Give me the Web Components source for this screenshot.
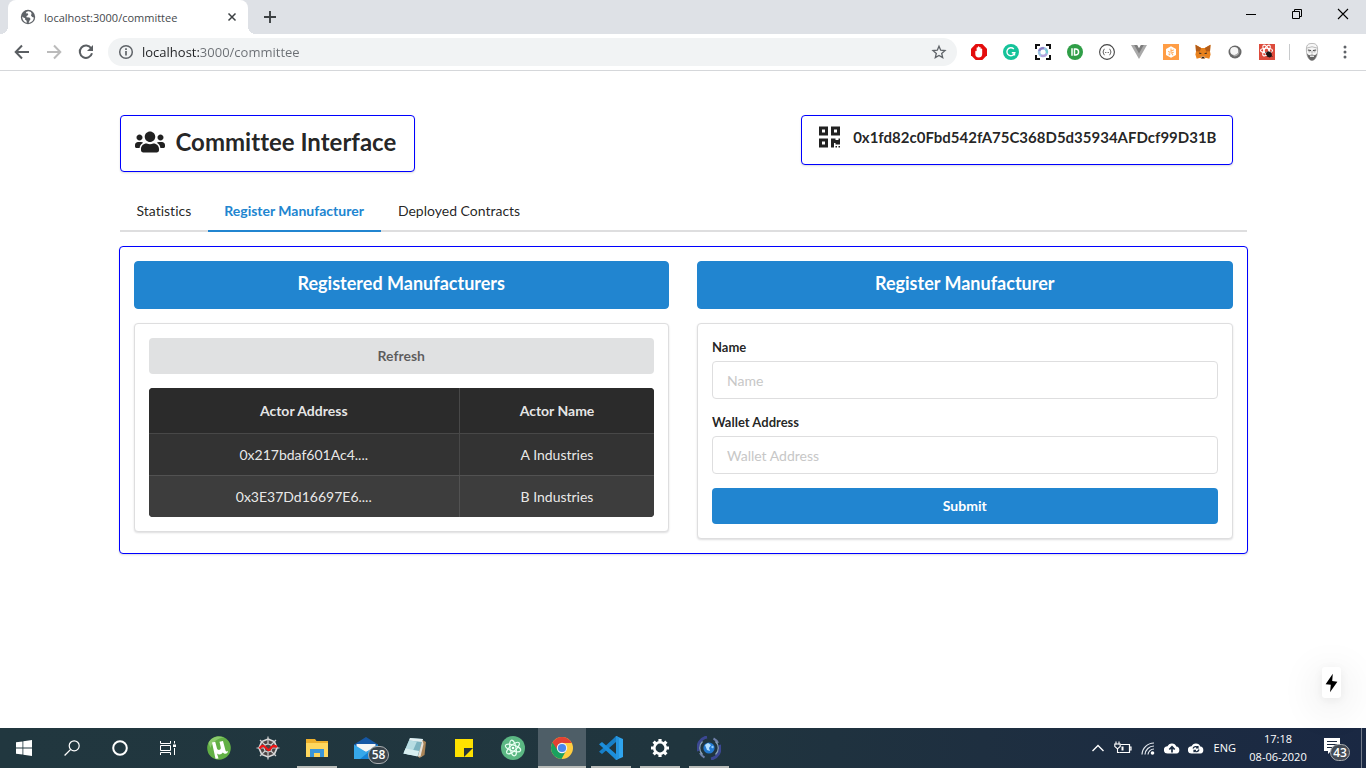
<!DOCTYPE html>
<html lang="en">
<head>
<meta charset="utf-8">
<meta name="viewport" content="width=device-width, initial-scale=1">
<title>Committee Interface</title>
<style>
  html, body { margin: 0; height: 100%; }
  body { background: #fff; font-family: Lato, "Liberation Sans", sans-serif; font-size: 14px; font-variant-ligatures: none; color: rgba(0,0,0,.87); }
</style>
</head>
<body>
<app-desktop></app-desktop>

<script>
const ICONS = {
  globe: ['0 0 16 16', '<circle cx="8" cy="8" r="7.2" fill="#5f6368"/><path d="M8.600 2.200C7 2.200 6 3 5.800 4.200L8 4.400 8.200 6 6.600 7 6.400 8.200 9.400 8.400 10.600 10 9.600 11.600 8.600 13.800C11.500 13.600 13.700 11.200 13.800 8.400L12.200 8 11 6.400 11.600 4.600 10.800 2.900ZM2.300 7.400C2 10.300 4 12.900 6.800 13.700L6.600 11.800 5 10.400 5.200 9.200 3.400 8.600Z" fill="#fff"/>'],
  close: ['0 0 16 16', '<path d="M4 4 12 12M12 4 4 12" stroke="#3c4043" stroke-width="1.7"/>'],
  plus: ['0 0 16 16', '<path d="M8 2V14M2 8H14" stroke="#3c4043" stroke-width="1.900"/>'],
  minimize: ['0 0 12 12', '<path d="M1 6.500H11" stroke="#000"/>'],
  restore: ['0 0 12 12', '<path d="M1.500 3.500H8.500V10.500H1.500ZM3.500 3.500V1.500H10.500V8.500H8.500" fill="none" stroke="#000"/>'],
  winclose: ['0 0 12 12', '<path d="M1 1 11 11M11 1 1 11" stroke="#000" stroke-width="1.100"/>'],
  back: ['0 0 16 16', '<path d="M15 8H2M8 1.500 1.700 8 8 14.500" fill="none" stroke="#5a5e62" stroke-width="2"/>'],
  forward: ['0 0 16 16', '<path d="M1 8H14M8 1.500 14.300 8 8 14.500" fill="none" stroke="#bbb" stroke-width="2"/>'],
  reload: ['0 0 16 16', '<path d="M13.200 4.300A6.200 6.200 0 1 0 14 9.300" fill="none" stroke="#5a5e62" stroke-width="2"/><path d="M15 1V7H9Z" fill="#5a5e62"/>'],
  info: ['0 0 16 16', '<circle cx="8" cy="8" r="6.300" fill="none" stroke="#5f6368" stroke-width="1.500"/><path d="M8 7V11.500M8 4.300V6" stroke="#5f6368" stroke-width="1.700"/>'],
  star: ['0 0 16 16', '<path d="M8 2.200 9.700 6.200 14 6.600 10.700 9.400 11.700 13.600 8 11.400 4.300 13.600 5.300 9.400 2 6.600 6.300 6.200Z" fill="none" stroke="#5f6368" stroke-width="1.300"/>'],
  adblock: ['0 0 16 16', '<path d="M4.700 0H11.300L16 4.700V11.300L11.300 16H4.700L0 11.300V4.700Z" fill="#e40d0d"/><path d="M4.300 7.500C4.300 6.500 5.500 6.500 5.600 7.300V4C5.600 3 6.900 3 6.900 4V3C6.900 2.100 8.300 2.100 8.300 3V3.600C8.300 2.800 9.700 2.800 9.700 3.800V5C9.700 4.200 11.200 4.200 11.200 5.200V10C11.200 12.500 9.700 13.500 7.800 13.500 5.500 13.500 4.300 12 4.300 10Z" fill="#fff"/>'],
  grammarly: ['0 0 16 16', '<circle cx="8" cy="8" r="8" fill="#15c39a"/><path d="M10.800 5A4 4 0 1 0 11.800 8.800H8.800M11.500 8.800V11.500" fill="none" stroke="#fff" stroke-width="1.400"/>'],
  lens: ['0 0 16 16', '<path d="M1 5V1H5M11 1H15V5M15 11V15H11M5 15H1V11" fill="none" stroke="#111" stroke-width="2"/><circle cx="8" cy="8" r="3.900" fill="none" stroke="#9cc4e4" stroke-width="2.600"/><path d="M4.200 7A4 4 0 0 1 9 4.200" fill="none" stroke="#8e7cc3" stroke-width="2.200"/><path d="M6 11.300A4 4 0 0 0 11.500 10" fill="none" stroke="#b9a0dc" stroke-width="2"/><path d="M11 5.500A4 4 0 0 1 12 9" fill="none" stroke="#74cfd0" stroke-width="2"/>'],
  pushbullet: ['0 0 16 16', '<circle cx="8" cy="8" r="8" fill="#2f9e47"/><path d="M5 4.300V11.700" stroke="#fff" stroke-width="1.500"/><path d="M7.500 4.900H8.500A3.100 3.100 0 0 1 8.500 11.100H7.500Z" fill="none" stroke="#fff" stroke-width="1.500"/>'],
  braces: ['0 0 16 16', '<circle cx="8" cy="8" r="7.400" fill="#fff" stroke="#444" stroke-width="1.100"/><path d="M5.500 5.200C4.200 5.200 4.900 7.500 3.800 8 4.900 8.500 4.200 10.800 5.500 10.800M10.500 5.200C11.800 5.200 11.100 7.500 12.200 8 11.100 8.500 11.800 10.800 10.500 10.800M6.300 8.500H7.300M8.700 8.500H9.700" fill="none" stroke="#444" stroke-width="1"/>'],
  vue: ['0 0 16 16', '<path d="M0 1H5L8 6 11 1H16L8 15Z" fill="#a9a9a9"/><path d="M3.200 1H6.200L8 4.200 9.800 1H12.800L8 9.400Z" fill="#7d7d7d"/>'],
  hex: ['0 0 16 16', '<path d="M0 0H16V16H0Z" fill="#ff9d45"/><path d="M8 2.200 13 5.100V10.900L8 13.800 3 10.900V5.100Z" fill="#fff"/><path d="M8 4.500V7.300L10.800 5.800M10.800 8.200 8.500 8.800 10 11.200M7.300 8.600 5.200 7.300M7 9.800 6 11.200M5.500 10H7.500" fill="none" stroke="#ffb066" stroke-width="1.100"/>'],
  metamask: ['0 0 16 16', '<path d="M.5.8 6.200 4H9.800L15.500.8 15 7.500 15.600 10.500 14.300 14.700 10.700 13.800 9.300 15H6.700L5.300 13.800 1.700 14.700.4 10.500 1 7.500Z" fill="#e8821e"/><path d="M.5.8 6.200 4 4.800 7.500 1 7.200ZM15.500.8 9.800 4 11.200 7.500 15 7.200Z" fill="#b35c18"/><path d="M4.500 8.200 7 10H4.200ZM11.500 8.200 9 10H11.800Z" fill="#3c3027"/><path d="M5.500 12.500 6.500 15H9.500L10.500 12.500Z" fill="#caa98a"/><path d="M7 13H9L9.300 14.300H6.700Z" fill="#2a2522"/>'],
  sphere: ['0 0 16 16', '<circle cx="8" cy="8" r="6.500" fill="#686868"/><circle cx="7.300" cy="7" r="4.100" fill="#f5f5f5"/><path d="M7 12.500C11 12.300 13 9.500 12.300 5.500 11.600 9 10 11 6 11Z" fill="#aaa"/>'],
  reactbug: ['0 0 16 16', '<path d="M0 0H16V16H0Z" fill="#dd4b3c"/><g fill="none" stroke="#fff" stroke-width="1.100"><ellipse cx="7.500" cy="6.500" rx="6" ry="2.300"/><ellipse cx="7.500" cy="6.500" rx="6" ry="2.300" transform="rotate(60 7.500 6.500)"/><ellipse cx="7.500" cy="6.500" rx="6" ry="2.300" transform="rotate(120 7.500 6.500)"/></g><ellipse cx="10" cy="10.300" rx="2.400" ry="3.200" fill="#191414" transform="rotate(-35 10 10.300)"/><path d="M6 8.500 13.500 12.500M8 13 12 7.500M7 10.500 13 9.800" stroke="#191414" stroke-width=".8"/>'],
  avatar: ['0 0 20 20', '<path d="M4.400 8C4 1.500 8 1.500 10 1.500S16 1.500 15.600 8C15.600 14.500 12.800 18.500 10 18.500S4.400 14.500 4.400 8Z" fill="#f7f7f7" stroke="#999" stroke-width=".7"/><path d="M5 11.500 7 13.200 10 12.600 13 13.200 15 11.500C14.400 15.500 12.500 18.500 10 18.500S5.600 15.500 5 11.500Z" fill="#666"/><path d="M5.800 8 9 8.500M11 8.500 14.200 8" stroke="#444" stroke-width="1.200"/><path d="M6.500 9.800H8.500M11.500 9.800H13.500M10 8.500V11.500" stroke="#888" stroke-width=".7"/><path d="M8 14.200H12" stroke="#fff" stroke-width="1.200"/><path d="M5 6Q10 3.500 15 6" stroke="#aaa" fill="none" stroke-width=".8"/>'],
  dots: ['0 0 16 16', '<circle cx="8" cy="3" r="1.500" fill="#5f6368"/><circle cx="8" cy="8" r="1.500" fill="#5f6368"/><circle cx="8" cy="13" r="1.500" fill="#5f6368"/>'],
  users: ['0 0 640 512', '<path fill="currentColor" d="M96 224c35.300 0 64-28.700 64-64s-28.700-64-64-64-64 28.700-64 64 28.700 64 64 64zm448 0c35.300 0 64-28.700 64-64s-28.700-64-64-64-64 28.700-64 64 28.700 64 64 64zm32 32h-64c-17.600 0-33.500 7.100-45.100 18.600 40.300 22.100 68.900 62 75.100 109.400h66c17.700 0 32-14.300 32-32v-32c0-35.300-28.700-64-64-64zm-256 0c61.900 0 112-50.100 112-112S381.900 32 320 32 208 82.100 208 144s50.100 112 112 112zm76.800 32h-8.300c-20.800 10-43.900 16-68.500 16s-47.600-6-68.500-16h-8.300C179.600 288 128 339.600 128 403.200V432c0 26.500 21.500 48 48 48h288c26.500 0 48-21.500 48-48v-28.800c0-63.600-51.600-115.200-115.200-115.200zm-223.700-13.400C161.500 263.100 145.600 256 128 256H64c-35.300 0-64 28.700-64 64v32c0 17.700 14.300 32 32 32h65.900c6.300-47.400 34.900-87.300 75.200-109.400z"/>'],
  qrcode: ['0 0 448 512', '<path fill="currentColor" d="M0 224h192V32H0v192zM64 96h64v64H64V96zm192-64v192h192V32H256zm128 128h-64V96h64v64zM0 480h192V288H0v192zm64-128h64v64H64v-64zm352-64h32v128h-96v-32h-32v96h-64V288h96v32h64v-32zm0 160h32v32h-32v-32zm-64 0h32v32h-32v-32z"/>'],
  bolt: ['0 0 13 20', '<path d="M7.800.8 .6 11.200 5.800 11.800 5 19.300 12.400 8.700 7.200 8Z" fill="#000"/>'],
  windows: ['0 0 16 16', '<path d="M0 2.300 6.500 1.400V7.600H0ZM7.300 1.300 16 0V7.600H7.300ZM0 8.400H6.500V14.600L0 13.700ZM7.300 8.400H16V16L7.300 14.700Z" fill="#fff"/>'],
  search: ['0 0 16 16', '<circle cx="10.200" cy="5.800" r="5" fill="none" stroke="#fff" stroke-width="1.200"/><path d="M6.700 9.400.6 15.500" stroke="#fff" stroke-width="1.300"/>'],
  cortana: ['0 0 16 16', '<circle cx="8" cy="8" r="6.800" fill="none" stroke="#fff" stroke-width="2"/>'],
  taskview: ['0 0 16 16', '<path d="M.5 1V3.500H10.500V1M.5 15V12.500H10.500V15M.5 5.500H10.500V10.500H.5ZM14.500 1V3.500M14.500 8V15" fill="none" stroke="#fff"/><path d="M13 4.500H16V7H13Z" fill="#fff"/>'],
  utorrent: ['0 0 24 24', '<circle cx="12" cy="12" r="11.800" fill="#62b045"/><path d="M1.500 7C4 1 11-1 17 1.500 11 2 5 6 3.500 12Z" fill="#8bca6d"/><path d="M5 6.500 8.200 5.800 10 12.500C10.800 15 14.300 14 13.800 11.500L12.500 5.700 16 5 18.500 14.500C19 15.800 20.400 15.600 21 14.800 21 17.800 17.800 19 15.800 16.500 14.500 18.800 11.500 19 10 17.500L11.500 22.500 8.500 22.800Z" fill="#fff"/>'],
  web: ['0 0 24 24', '<path d="M12 3 18.300 5.600 21 12 18.300 18.400 12 21 5.700 18.400 3 12 5.700 5.600Z" fill="#4c4545" stroke="#dcdcdc" stroke-width="1.600"/><path d="M12 .5V8M12 16V23.500M.5 12H8M16 12H23.500M4 4 9 9M15 15 20 20M20 4 15 9M9 15 4 20M12 8 15 9 16 12 15 15 12 16 9 15 8 12 9 9Z" stroke="#d0d0d0" fill="none" stroke-width="1.200"/><path d="M3.500 12.500C6 9 7.500 9.500 9.500 11.500S13 15.500 14.500 12.500 18.500 9.500 21 11" stroke="#f01515" fill="none" stroke-width="2.300"/>'],
  explorer: ['0 0 24 24', '<path d="M1 3H10L11.500 5H23V20H1Z" fill="#eeb02c"/><path d="M1 7H23V21H1Z" fill="#ffd75e"/><path d="M5 21V13H19V21H15V17H9V21Z" fill="#3b96d9"/>'],
  mail: ['0 0 24 24', '<path d="M0 8.500 12 1 24 8.500V22H0Z" fill="#1557a5"/><path d="M2.500 8H21.500V12L12 16 2.500 12Z" fill="#f5f5f5"/><path d="M0 8.500 12 16 24 8.500V23H0Z" fill="#36a8ea"/><path d="M24 8.500 6 23H24Z" fill="#1683d5"/>'],
  notepad: ['0 0 24 24', '<path d="M7 2 20 3 19 21 .5 17.500Z" fill="#7db3c0"/><path d="M7 2 20 3 19 6 6 4.500Z" fill="#e3eef0"/><path d="M6 4.500 14 5.500 8 19 .5 17.500Z" fill="#b8dde3"/><path d="M2.500 12.500 16 15 14.500 20.500 .5 17.500Z" fill="#d8eef0"/><path d="M19.500 4 23 6 21.500 19 16.500 22 15 20.500Z" fill="#a98457"/><path d="M19.500 4 20.500 8 17.500 20.500 15 20.500Z" fill="#e6e2dc"/>'],
  sticky: ['0 0 24 24', '<path d="M3 3H21V21H3Z" fill="#ffe100"/><path d="M12 12H21L12 21Z" fill="#28343a"/>'],
  atom: ['0 0 24 24', '<circle cx="12" cy="12" r="12" fill="#5bb783"/><g fill="none" stroke="#e8fff2" stroke-width="1.100"><ellipse cx="12" cy="12" rx="8" ry="3" transform="rotate(18 12 12)"/><ellipse cx="12" cy="12" rx="8" ry="3" transform="rotate(78 12 12)"/><ellipse cx="12" cy="12" rx="8" ry="3" transform="rotate(138 12 12)"/></g><circle cx="12" cy="12" r="1.300" fill="#fff"/>'],
  chrome: ['0 0 24 24', '<circle cx="12" cy="12" r="11" fill="#ffcd40"/><path d="M12 12 2.500 6.500A11 11 0 0 0 11.500 23L16.500 14Z" fill="#1aa15f"/><path d="M2.500 6.500A11 11 0 0 1 21.500 6.500L21.700 7H12L7.500 14Z" fill="#e34133"/><circle cx="12" cy="12" r="5.200" fill="#f4f4f4"/><circle cx="12" cy="12" r="4.100" fill="#4a87ee"/>'],
  vscode: ['0 0 24 24', '<path d="M17 0 24 3V21L17 24Z" fill="#2fa4ee"/><path d="M17 0V6L3 18 0 15.800 14 3Z" fill="#177fc8"/><path d="M17 24V18L3 6 0 8.200 14 21Z" fill="#1c8edb"/><path d="M17 0 20 1.300V22.700L17 24Z" fill="#2494df"/>'],
  gear: ['0 0 24 24', '<circle cx="12" cy="12" r="5.700" fill="none" stroke="#fff" stroke-width="2.600"/><path d="M12 3V6M12 18V21M3 12H6M18 12H21M5.600 5.600 7.800 7.800M16.200 16.200 18.400 18.400M18.400 5.600 16.200 7.800M7.800 16.200 5.600 18.400" stroke="#fff" stroke-width="3.200"/>'],
  orb: ['0 0 24 24', '<path d="M10 1A11 11 0 0 0 1.500 15M14 23A11 11 0 0 0 22.500 9" fill="none" stroke="#3b4792" stroke-width="3"/><path d="M3 17A11 11 0 0 0 7.500 21.500M21 7A11 11 0 0 0 16.500 2.500" fill="none" stroke="#6f7fa8" stroke-width="2"/><path d="M5.500 5.500A9 9 0 0 0 5.500 18.500M18.500 5.500A9 9 0 0 1 18.500 18.500" fill="none" stroke="#8aa2b4" stroke-width="1.200"/><circle cx="12" cy="12" r="5.600" fill="#2379cf"/><path d="M8 9 11 7 14 9 12 12 13 15 10 14Z" fill="#b4e0ff"/><circle cx="15.500" cy="11" r="1.200" fill="#8ccaff"/>'],
  chevron: ['0 0 16 16', '<path d="M2.500 11 8 5.500 13.500 11" fill="none" stroke="#fff" stroke-width="1.400"/>'],
  battery: ['0 0 18 16', '<path d="M6.500 4.500H15.500V12.500H5.500M15.500 7H17V10H15.500" fill="none" stroke="#fff" stroke-width="1.200"/><path d="M7.500 6.500H9.500V10.500H7.500Z" fill="#fff"/><path d="M2 1.500V4.500M5 1.500V4.500M3.500 8V12.500H5.500" fill="none" stroke="#fff" stroke-width="1.100"/><path d="M.8 4H6.200V6.500L3.500 8.800.8 6.500Z" fill="none" stroke="#fff" stroke-width="1.100"/>'],
  wifi: ['0 0 16 16', '<path d="M2 14.500A12 12 0 0 1 14 3M5 14.500A9 9 0 0 1 14 6M8 14.500A6 6 0 0 1 14 9" fill="none" stroke="#e4e9ef" stroke-width="1.200"/><circle cx="12.500" cy="13" r="1.800" fill="#fff"/>'],
  cloudup: ['0 0 16 16', '<path d="M3.500 13.500A3.600 3.600 0 0 1 3.500 6.300 4.700 4.700 0 0 1 12.300 6.600 3.500 3.500 0 0 1 12.500 13.500Z" fill="#fff"/><path d="M8 12.500V8M5.300 9.500 8 6.800 10.700 9.500" fill="none" stroke="#1d2d42" stroke-width="1.700"/>'],
  cloudsync: ['0 0 16 16', '<path d="M3.500 13.500A3.600 3.600 0 0 1 3.500 6.300 4.700 4.700 0 0 1 12.300 6.600 3.500 3.500 0 0 1 12.500 13.500Z" fill="#fff"/><path d="M5 8.500A3 3 0 0 1 10 7.500V6M11 9.500A3 3 0 0 1 6 10.900V12.200M10.500 8H8M5.500 10.300H8" fill="none" stroke="#1d2d42" stroke-width="1.200"/>'],
  action: ['0 0 16 16', '<path d="M0 0H16V13H7L4 16V13H0Z" fill="#fff"/><path d="M3 3.500H13M3 6.500H13M3 9.500H10" stroke="#1c2a40" stroke-width="1.200"/>']
};

const define = (name, html, setup) => {
  const template = document.createElement('template');
  template.innerHTML = html;
  customElements.define(name, class extends HTMLElement {
    constructor() {
      super();
      this.attachShadow({ mode: 'open' }).append(template.content.cloneNode(true));
    }
    connectedCallback() { if (setup) setup(this, this.shadowRoot); }
  });
};

define('ui-icon', `
  <style>:host{display:block;flex:none;width:16px;height:16px} svg{display:block;width:100%;height:100%}</style>
  <svg aria-hidden="true"></svg>`,
  (el, root) => {
    const [box, shapes] = ICONS[el.getAttribute('name')];
    const svg = root.querySelector('svg');
    svg.setAttribute('viewBox', box);
    svg.innerHTML = shapes;
  });

/* Browser window frame */
define('browser-frame', `
  <style>
    :host{display:block;font-family:"Open Sans","Noto Sans",sans-serif}
    button{border:0;background:none;padding:0;display:grid;place-items:center}
    .strip{display:flex;height:34px;background:#dee1e6;padding-left:8px}
    .tab{position:relative;display:flex;align-items:center;box-sizing:border-box;width:240px;padding:0 9px 0 12px;background:#fff;border-radius:8px 8px 0 0;font-size:11px;color:#45494d}
    .tab::before,.tab::after{content:"";position:absolute;bottom:0;width:8px;height:8px}
    .tab::before{right:100%;background:radial-gradient(circle at 0 0,transparent 8px,#fff 8px)}
    .tab::after{left:100%;background:radial-gradient(circle at 100% 0,transparent 8px,#fff 8px)}
    .tab span{flex:1;padding-left:8px;white-space:nowrap}
    .tab ui-icon[name=close]{width:14px;height:14px}
    .new{width:28px;margin-left:8px}
    .win{display:flex;margin-left:auto}
    .win button{width:46px;height:28px}
    .win ui-icon{width:12px;height:12px}
    .bar{display:flex;align-items:center;height:36px;border-bottom:1px solid #d5d7da;background:#fff;padding:0 14px;gap:16px}
    .omni{flex:1;display:flex;align-items:center;height:28px;padding:0 10px;margin:0 -2px;border-radius:14px;background:#f1f3f4}
    .omni input{flex:1;min-width:0;border:0;outline:0;padding:0 0 0 8px;font:13px/20px "Open Sans","Noto Sans",sans-serif;color:transparent;background:linear-gradient(90deg,#202124 65px,#6a6e73 65px);-webkit-background-clip:text;background-clip:text}
    .sep{width:1px;height:16px;background:#c8cacc;margin:0 -4px 0 -2px}
    .profile{width:20px;height:20px}
    .menu{margin:0 -1px}
  </style>
  <header>
    <div class="strip">
      <div class="tab"><ui-icon name="globe"></ui-icon><span>localhost:3000/committee</span><button aria-label="Close tab"><ui-icon name="close"></ui-icon></button></div>
      <button class="new" aria-label="New tab"><ui-icon name="plus"></ui-icon></button>
      <div class="win">
        <button aria-label="Minimize"><ui-icon name="minimize"></ui-icon></button>
        <button aria-label="Restore"><ui-icon name="restore"></ui-icon></button>
        <button aria-label="Close"><ui-icon name="winclose"></ui-icon></button>
      </div>
    </div>
    <div class="bar">
      <button aria-label="Back"><ui-icon name="back"></ui-icon></button>
      <button aria-label="Forward"><ui-icon name="forward"></ui-icon></button>
      <button aria-label="Reload"><ui-icon name="reload"></ui-icon></button>
      <div class="omni">
        <ui-icon name="info"></ui-icon>
        <input type="text" aria-label="Address bar" value="localhost:3000/committee" spellcheck="false">
        <button aria-label="Bookmark"><ui-icon name="star"></ui-icon></button>
      </div>
      <button aria-label="Ad blocker"><ui-icon name="adblock"></ui-icon></button>
      <button aria-label="Grammar"><ui-icon name="grammarly"></ui-icon></button>
      <button aria-label="Screen capture"><ui-icon name="lens"></ui-icon></button>
      <button aria-label="Push"><ui-icon name="pushbullet"></ui-icon></button>
      <button aria-label="JSON viewer"><ui-icon name="braces"></ui-icon></button>
      <button aria-label="Vue tools"><ui-icon name="vue"></ui-icon></button>
      <button aria-label="Hex"><ui-icon name="hex"></ui-icon></button>
      <button aria-label="Wallet"><ui-icon name="metamask"></ui-icon></button>
      <button aria-label="Sphere"><ui-icon name="sphere"></ui-icon></button>
      <button aria-label="React tools"><ui-icon name="reactbug"></ui-icon></button>
      <div class="sep"></div>
      <button aria-label="Profile"><ui-icon name="avatar" class="profile"></ui-icon></button>
      <button class="menu" aria-label="Menu"><ui-icon name="dots"></ui-icon></button>
    </div>
  </header>`);

/* Bordered box used for headers and cards */
define('ui-segment', `
  <style>
    :host{display:block;box-sizing:border-box;padding:14px;border:1px solid #dededf;border-radius:4px;background:#fff;box-shadow:0 1px 2px rgba(34,36,38,.15)}
    :host([outlined]){border-color:#00f}
    :host([filled]){border-color:#2185d0;background:#2185d0;color:#fff;box-shadow:none;padding:11px 14px 15px;text-align:center}
  </style><slot></slot>`);

define('ui-button', `
  <style>
    :host{display:block}
    button{display:block;width:100%;height:36px;border:0;border-radius:4px;padding:0 20px;background:#e0e1e2;color:rgba(0,0,0,.6);font:700 14px/14px Lato,"Liberation Sans",sans-serif}
    :host([primary]) button{background:#2185d0;color:#fff}
  </style><button type="button"><slot></slot></button>`);

define('form-field', `
  <style>
    :host{display:block}
    label{display:block;margin-bottom:4px;font-weight:700;font-size:13px;line-height:19px;color:rgba(0,0,0,.87)}
    input{display:block;box-sizing:border-box;width:100%;height:38px;padding:0 14px;border:1px solid #dededf;border-radius:4px;background:#fff;outline:0;font:14px/17px Lato,"Liberation Sans",sans-serif}
    input::placeholder{color:#c7c7c7}
  </style>
  <label for="field"></label><input id="field" type="text">`,
  (el, root) => {
    root.querySelector('label').textContent = el.getAttribute('label');
    root.querySelector('input').placeholder = el.getAttribute('label');
  });

define('actor-table', `
  <style>
    :host{display:block;border-radius:4px;overflow:hidden;background:#333}
    table{width:100%;border-collapse:separate;border-spacing:0;color:rgba(255,255,255,.9);font-size:14px;line-height:19px;text-align:center}
    th{background:#2b2b2b;padding:13px;font-weight:700}
    td{border-top:1px solid #484848;padding:11px 13px}
    th+th,td+td{border-left:1px solid #484848}
    tr:nth-child(2n) td{background:#3d3d3d;border-color:#525252}
  </style>
  <table>
    <thead><tr><th>Actor Address</th><th>Actor Name</th></tr></thead>
    <tbody>
      <tr><td>0x217bdaf601Ac4....</td><td>A Industries</td></tr>
      <tr><td>0x3E37Dd16697E6....</td><td>B Industries</td></tr>
    </tbody>
  </table>`);

define('tab-menu', `
  <style>
    :host{display:block}
    nav{display:flex;border-bottom:2px solid #dededf}
    a{padding:13px 17px 11px;margin-bottom:-2px;border-bottom:2px solid transparent;line-height:16px;color:rgba(0,0,0,.87);text-decoration:none}
    a[aria-current]{padding-left:16px;color:#2185d0;border-color:#2185d0;font-weight:700}
  </style>
  <nav><a href="#statistics">Statistics</a><a href="#register" aria-current="page">Register Manufacturer</a><a href="#contracts">Deployed Contracts</a></nav>`);

define('committee-page', `
  <style>
    :host{display:block;position:relative;padding:44px 24px 24px}
    main{max-width:1129px;margin:0 auto}
    .top{display:flex;justify-content:space-between;align-items:flex-start;padding:0 15px 0 1px}
    h1,h2,h3{margin:0;font-weight:700}
    h1,.addr{display:flex;align-items:center}
    h1{gap:11px;font-size:24px;line-height:27px}
    h1 ui-icon{width:30px;height:24px}
    .addr{gap:13px;padding-left:2px;font-size:15px;line-height:20px}
    .addr ui-icon{width:21px;height:24px}
    ui-segment.title{padding:12px 18px 16px 14px}
    ui-segment.wallet{padding:9px 15px 15px}
    tab-menu{margin:18px 1px 14px}
    .cols{display:grid;grid-template-columns:1fr 1fr;gap:28px;align-items:start}
    .stack{display:grid;gap:14px}
    h3{font-size:18px;line-height:20px}
    .bolt{position:absolute;right:25px;bottom:30px;display:grid;place-items:center;width:19px;height:31px;padding:0;border:0;border-radius:3px;background:#fff;box-shadow:0 8px 40px rgba(0,0,0,.16),0 2px 10px rgba(0,0,0,.06)}
    .bolt ui-icon{width:13px;height:20px}
  </style>
  <main>
    <div class="top">
      <ui-segment outlined class="title"><h1><ui-icon name="users"></ui-icon>Committee Interface</h1></ui-segment>
      <ui-segment outlined class="wallet"><h2 class="addr"><ui-icon name="qrcode"></ui-icon>0x1fd82c0Fbd542fA75C368D5d35934AFDcf99D31B</h2></ui-segment>
    </div>
    <tab-menu></tab-menu>
    <ui-segment outlined>
      <div class="cols">
        <section class="stack">
          <ui-segment filled><h3>Registered Manufacturers</h3></ui-segment>
          <ui-segment><div class="stack"><ui-button>Refresh</ui-button><actor-table></actor-table></div></ui-segment>
        </section>
        <section class="stack">
          <ui-segment filled><h3>Register Manufacturer</h3></ui-segment>
          <ui-segment><div class="stack"><form-field label="Name"></form-field><form-field label="Wallet Address"></form-field><ui-button primary>Submit</ui-button></div></ui-segment>
        </section>
      </div>
    </ui-segment>
  </main>
  <button class="bolt" aria-label="Quick action"><ui-icon name="bolt"></ui-icon></button>`);

define('task-item', `
  <style>
    :host{display:block;position:relative;width:48px;height:40px}
    button{display:grid;place-items:center;width:100%;height:100%;border:0;padding:0;background:none}
    ui-icon{width:24px;height:24px}
    :host([small]) ui-icon{width:16px;height:16px}
    :host([open])::after{content:"";position:absolute;left:4px;right:4px;bottom:0;height:2px;background:#b9bcb9}
    :host([active]){background:#4e5e67}
    :host([active])::after{left:0;right:0}
    ::slotted(span){position:absolute;left:26px;top:18px;box-sizing:border-box;width:21px;height:18px;border:1px solid #a9adb0;border-radius:9px;background:#3b454c;color:#fff;font:600 12px/16px "Open Sans","Noto Sans",sans-serif;text-align:center}
  </style><button><ui-icon name="windows"></ui-icon></button><slot></slot>`,
  (el, root) => {
    const name = el.getAttribute('icon');
    root.querySelector('button').setAttribute('aria-label', name);
    const icon = document.createElement('ui-icon');
    icon.setAttribute('name', name);
    root.querySelector('ui-icon').replaceWith(icon);
  });

define('task-bar', `
  <style>
    :host{display:flex;height:40px;background:linear-gradient(90deg,#21373f 0%,#20353e 50%,#1e2f40 72%,#1a2843 100%);color:#fff;font-family:"Open Sans","Noto Sans",sans-serif}
    .apps{display:flex;gap:1px;margin-left:3px}
    .tray{display:flex;align-items:center;margin-left:auto;gap:8px;font-size:11px;line-height:18px}
    .tray button{border:0;padding:0;background:none}
    .tray ui-icon[name=battery]{width:18px}
    .lang{margin-left:2px}
    .clock{width:64px;text-align:center;margin-left:2px}
    .note{position:relative;margin:0 4px 0 6px}
    .note span{position:absolute;left:6px;top:6px;box-sizing:border-box;width:20px;height:17px;border:1px solid #a9adb0;border-radius:9px;background:#444b55;color:#fff;font:600 12px/15px "Open Sans","Noto Sans",sans-serif;text-align:center}
    .edge{width:4px;height:40px;border-left:1px solid #737b8a;margin-left:9px}
  </style>
  <task-item small icon="windows"></task-item><task-item small icon="search"></task-item><task-item small icon="cortana"></task-item><task-item small icon="taskview"></task-item>
  <div class="apps">
    <task-item icon="utorrent"></task-item><task-item icon="web"></task-item><task-item icon="explorer" open></task-item>
    <task-item icon="mail"><span>58</span></task-item><task-item icon="notepad"></task-item><task-item icon="sticky"></task-item>
    <task-item icon="atom"></task-item><task-item icon="chrome" open active></task-item><task-item icon="vscode" open></task-item>
    <task-item icon="gear" open></task-item><task-item icon="orb" open></task-item>
  </div>
  <div class="tray">
    <button aria-label="Hidden icons"><ui-icon name="chevron"></ui-icon></button>
    <ui-icon name="battery"></ui-icon><ui-icon name="wifi"></ui-icon><ui-icon name="cloudup"></ui-icon><ui-icon name="cloudsync"></ui-icon>
    <div class="lang">ENG</div>
    <div class="clock"><div>17:18</div><div>08-06-2020</div></div>
    <div class="note"><button aria-label="Notifications"><ui-icon name="action"></ui-icon></button><span>43</span></div>
    <div class="edge"></div>
  </div>`);

define('app-desktop', `
  <style>
    :host{display:flex;flex-direction:column;min-height:100%}
    committee-page{flex:1}
  </style>
  <browser-frame></browser-frame><committee-page></committee-page><task-bar></task-bar>`);
</script>
</body>
</html>
